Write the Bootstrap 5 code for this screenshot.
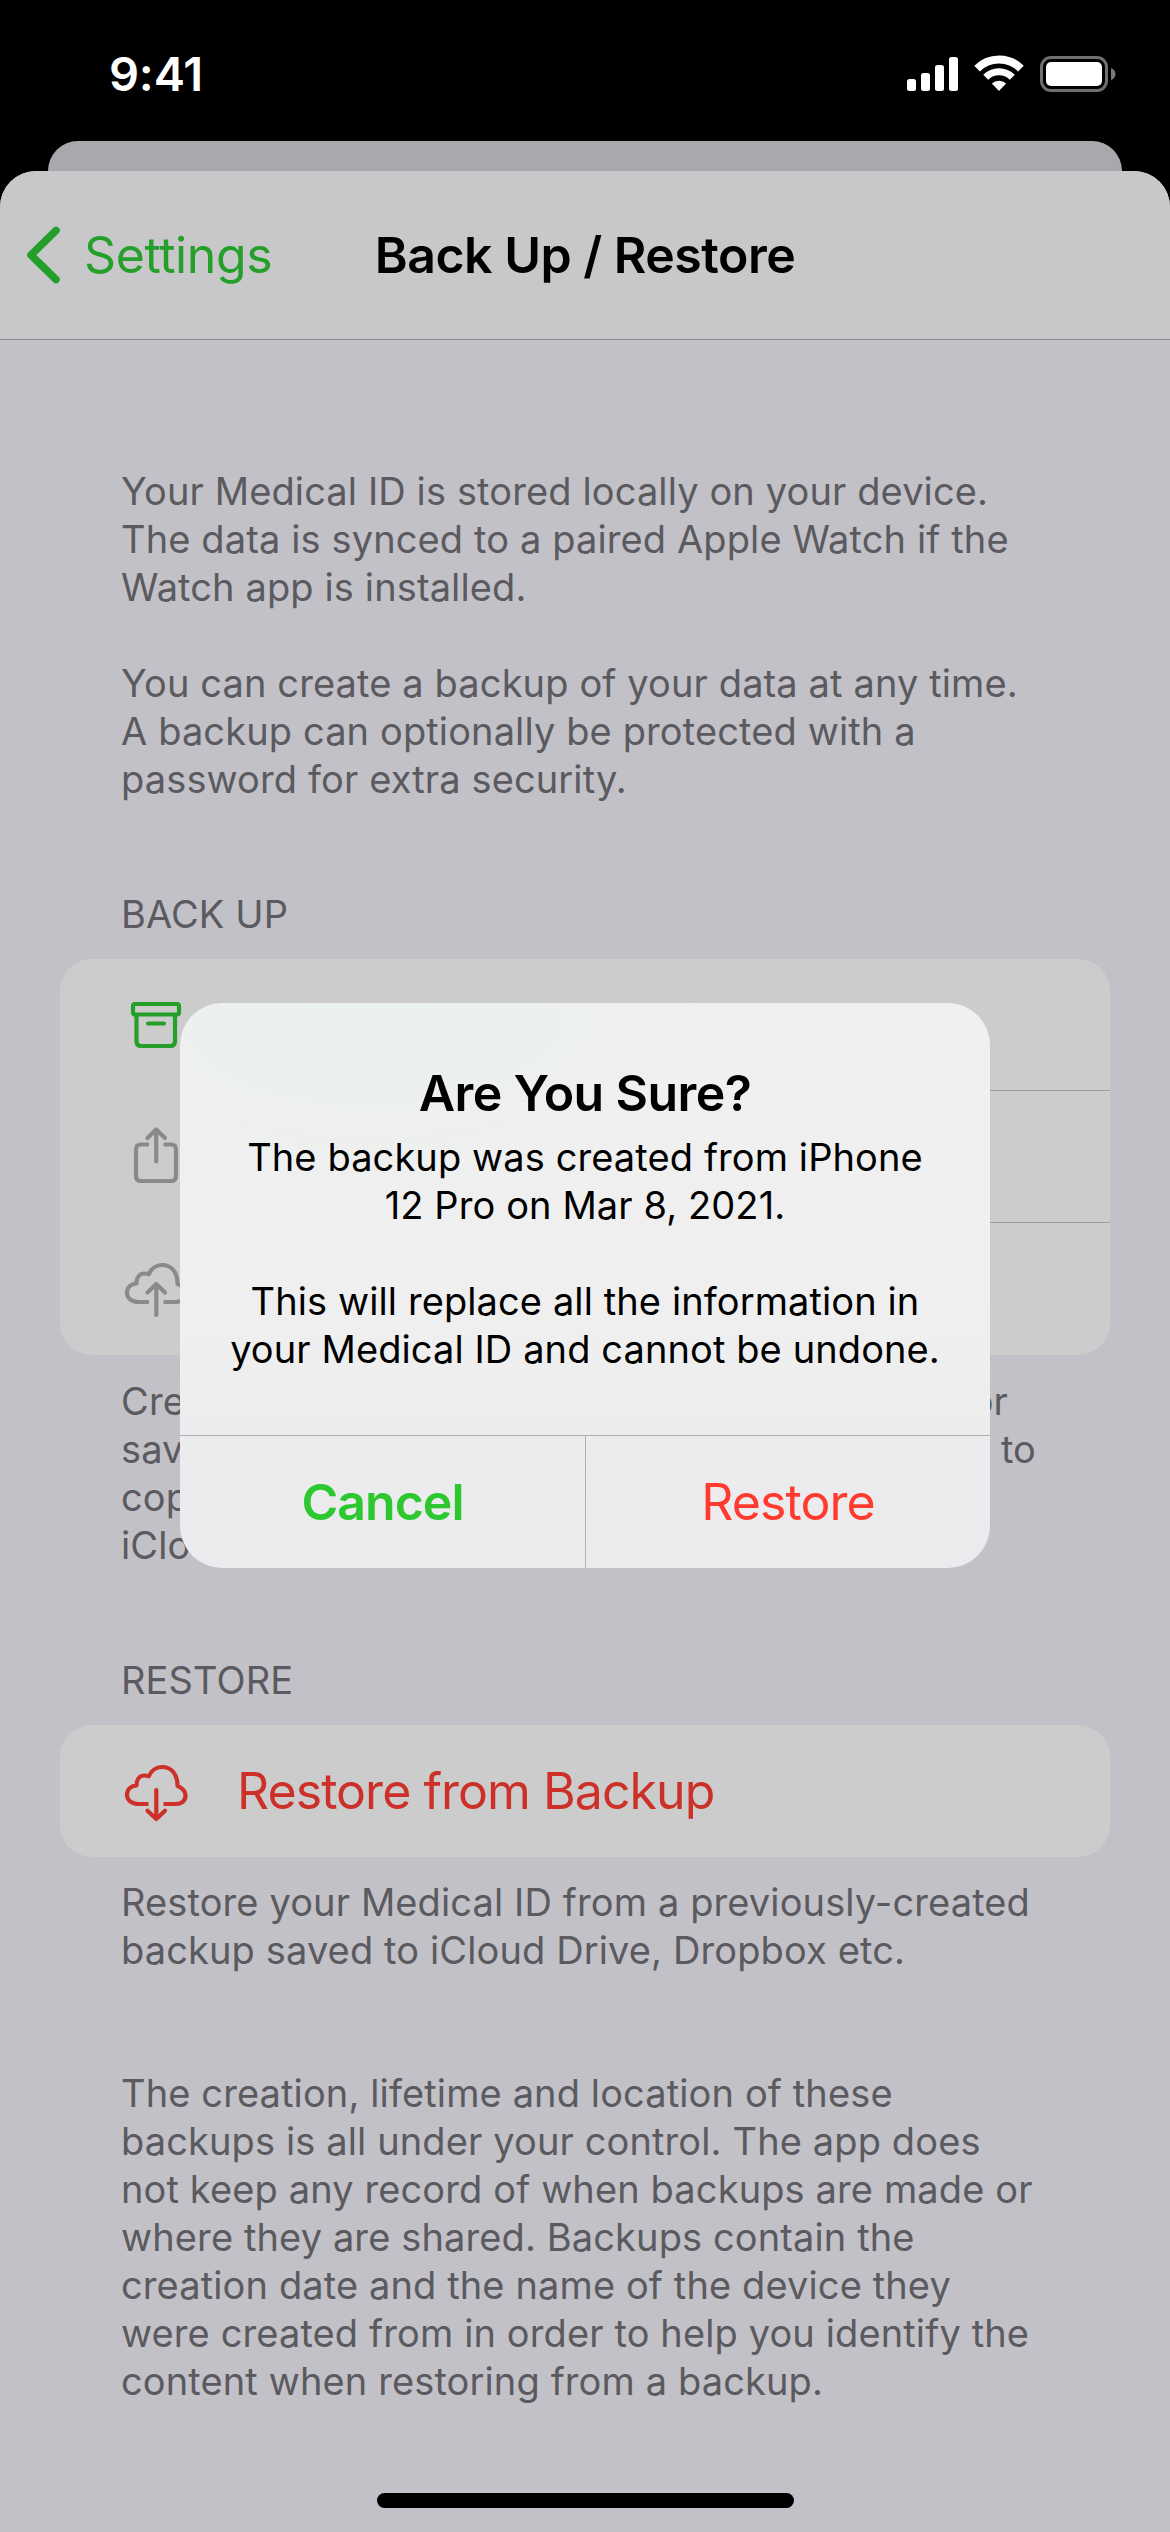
<!DOCTYPE html>
<html lang="en">
<head>
<meta charset="utf-8">
<meta name="viewport" content="width=device-width, initial-scale=1">
<title>Back Up / Restore</title>
<link href="https://cdn.jsdelivr.net/npm/bootstrap@5.3.0/dist/css/bootstrap.min.css" rel="stylesheet">
<style>
  body { background: #000; font-family: Inter, "Liberation Sans", sans-serif; }
  .phone { width: 1170px; height: 2532px; background: #000; }
  .status-bar { height: 141px; padding: 46px 54px 0 109px; }
  .clock { font-size: 47px; line-height: 56px; font-weight: 600; color: #fff; letter-spacing: -.2px; }
  .status-icons { margin-top: 8px; }
  .back-sheet { height: 30px; margin: 0 48px; background: #a9a8ad; border-radius: 34px 34px 0 0; }
  .sheet { background: #c2c1c7; border-radius: 36px 36px 0 0; height: 2361px; }
  .sheet-nav { height: 169px; background: #c8c8ca; border-bottom: 1px solid #8a8a8e; }
  .back-link { font-size: 50px; color: #249f29; gap: 23px; padding-left: 26px; letter-spacing: -.4px; }
  .back-link .stroked { stroke-width: 7.6; }
  .nav-title { font-size: 50px; font-weight: 600; color: #000; letter-spacing: -.5px; }
  .sheet-body { padding: 127px 60px 0; }
  .note { font-size: 38px; line-height: 48px; color: #5a5a5f; letter-spacing: .12px; padding: 0 61px; margin: 0; white-space: nowrap; }
  .note-after { padding-top: 22px; }
  .note-restore { padding-top: 21px; }
  .note-last { padding-top: 95px; }
  .note-first-end { padding-right: 28px; }
  .note-tail { padding-right: 13px; }
  .section-head { letter-spacing: .1px; margin: 87px 0 21px; }
  .group { border-radius: 32px; background: #ccc; overflow: hidden; }
  .item { height: 132px; padding-left: 64px; gap: 49px; color: #8a8a8a; }
  .item-green { color: #249f29; }
  .item-red { color: #cc3028; font-size: 50px; letter-spacing: -.95px; }
  .item-label { border-bottom: 1px solid #9d9d9f; }
  .item:last-child .item-label { border-bottom: 0; }
  .stroked { fill: none; stroke: currentColor; stroke-width: 4.2; stroke-linecap: round; stroke-linejoin: round; }
  .home-bar { left: 377px; top: 2493px; width: 417px; height: 15px; border-radius: 8px; background: #000; }
  .alert-box { left: 180px; top: 1003px; width: 810px; height: 565px; border-radius: 42px; overflow: hidden; color: #000;
    background: radial-gradient(420px 200px at 190px 0, rgba(215,245,222,.22), rgba(215,245,222,0)), linear-gradient(#f0f0f0, #efefef 60%, #ececee 80%, #ebebed); }
  .alert-text { height: 432px; padding-top: 58px; }
  .alert-title { font-size: 50px; line-height: 64px; font-weight: 600; letter-spacing: -.6px; margin: 0 0 8px; }
  .alert-msg { font-size: 38px; line-height: 48px; letter-spacing: .1px; margin: 0; white-space: nowrap; }
  .alert-actions { height: 133px; border-top: 1px solid #b0b0b3; }
  .alert-btn { font-size: 50px; border: 0; background: none; padding: 1px 0 0; letter-spacing: -.95px; }
  .alert-btn + .alert-btn { border-left: 1px solid #b0b0b3; }
  .cancel { color: #2dc72f; font-weight: 600; }
  .confirm { color: #ff3b30; }
</style>
</head>
<body>
<div class="phone position-relative overflow-hidden">
  <header class="status-bar d-flex justify-content-between align-items-start">
    <span class="clock">9:41</span>
    <svg class="status-icons" width="210" height="40" viewBox="906 54 210 40">
      <g fill="#fff">
        <rect x="907" y="79" width="9" height="12" rx="2.5"/>
        <rect x="921" y="73" width="9" height="18" rx="2.5"/>
        <rect x="935" y="65" width="9" height="26" rx="2.5"/>
        <rect x="949" y="57" width="9" height="34" rx="2.5"/>
        <path d="M999 91L991.9 83.6A10 10 0 0 1 1006.1 83.6Z"/>
        <rect x="1046" y="62" width="56" height="24" rx="5"/>
      </g>
      <g fill="none" stroke="#fff">
        <path stroke-width="8" d="M977.1 68.6A31 31 0 0 1 1020.9 68.6"/>
        <path stroke-width="7" d="M985.7 77.2A18.8 18.8 0 0 1 1012.3 77.2"/>
      </g>
      <rect x="1041.5" y="57.5" width="65" height="33" rx="9.5" fill="none" stroke="#6f6f6f" stroke-width="3"/>
      <path fill="#7a7a7a" d="M1111 68Q1115.500 70 1115.500 74T1111 80Z"/>
    </svg>
  </header>
  <div class="back-sheet"></div>
  <main class="sheet overflow-hidden">
    <nav class="sheet-nav row g-0 align-items-center">
      <div class="col-3 back-link d-flex align-items-center text-nowrap">
        <svg width="35" height="58" viewBox="0 0 35 58"><path class="stroked" d="M30 4.500L5 29L30 53.500"/></svg>
        <span>Settings</span>
      </div>
      <div class="col-6 nav-title text-center text-nowrap">Back Up / Restore</div>
    </nav>
    <div class="sheet-body">
      <p class="note">Your Medical ID is stored locally on your device.<br>The data is synced to a paired Apple Watch if the<br>Watch app is installed.<br><br>You can create a backup of your data at any time.<br>A backup can optionally be protected with a<br>password for extra security.</p>

      <h2 class="note section-head fw-normal">BACK UP</h2>
      <div class="group">
        <div class="item item-green d-flex align-items-center">
          <svg width="64" height="64" viewBox="0 0 64 64"><g class="stroked"><rect x="9" y="11" width="46" height="10.500" rx="2"/><path d="M12.500 22V48.500Q12.500 53 17 53H46.500Q51 53 51 48.500V22M24 30.500H40"/></g></svg>
          <div class="item-label flex-grow-1 align-self-stretch"></div>
        </div>
        <div class="item d-flex align-items-center">
          <svg width="64" height="64" viewBox="0 0 64 64"><g class="stroked"><path stroke-linecap="butt" d="M25 19.500H17Q12 19.500 12 24.500V51Q12 56 17 56H47Q52 56 52 51V24.500Q52 19.500 47 19.500H39.500"/><path d="M32.200 36.500V4.500M23.500 13L32.200 4.500L41 13"/></g></svg>
          <div class="item-label flex-grow-1 align-self-stretch"></div>
        </div>
        <div class="item d-flex align-items-center">
          <svg width="64" height="64" viewBox="0 0 64 64"><g class="stroked"><path stroke-linecap="butt" d="M25 45H14.500C7.500 45 3 41 3 36C3 30.500 7 26.800 12.500 26.400C12.500 20 16 16.500 20.500 16.500C22 16.500 23.500 16.800 24.800 17.300C27 12 32 8 38 8C47.500 8 53.500 15 53.500 26.800C58.500 29 61.500 32 61.500 36.500C61.500 42 57.500 45 51.500 45H39.500"/><path d="M32.300 58V27M23.500 35.500L32.300 27L41 35.500"/></g></svg>
          <div class="item-label flex-grow-1 align-self-stretch"></div>
        </div>
      </div>
      <div class="note note-after d-flex justify-content-between">
        <span>Cre<br>sav<br>cop<br>iClo</span>
        <span class="note-tail text-end"><span class="note-first-end">or</span><br>to</span>
      </div>

      <h2 class="note section-head fw-normal">RESTORE</h2>
      <div class="group">
        <div class="item item-red d-flex align-items-center">
          <svg width="64" height="64" viewBox="0 0 64 64"><g class="stroked"><path stroke-linecap="butt" d="M24.500 45H14.500C7.500 45 3 41 3 36C3 30.500 7 26.800 12.500 26.400C12.500 20 16 16.500 20.500 16.500C22 16.500 23.500 16.800 24.800 17.300C27 12 32 8 38 8C47.500 8 53.500 15 53.500 26.800C58.500 29 61.500 32 61.500 36.500C61.500 42 57.500 45 51.500 45H39.500"/><path d="M32.300 31V60M23.500 51.800L32.300 60L41 51.800"/></g></svg>
          <span>Restore from Backup</span>
        </div>
      </div>
      <p class="note note-restore">Restore your Medical ID from a previously-created<br>backup saved to iCloud Drive, Dropbox etc.</p>
      <p class="note note-last">The creation, lifetime and location of these<br>backups is all under your control. The app does<br>not keep any record of when backups are made or<br>where they are shared. Backups contain the<br>creation date and the name of the device they<br>were created from in order to help you identify the<br>content when restoring from a backup.</p>
    </div>
  </main>
  <div class="home-bar position-absolute"></div>

  <div class="alert-box position-absolute d-flex flex-column" role="alertdialog">
    <div class="alert-text text-center">
      <h1 class="alert-title">Are You Sure?</h1>
      <p class="alert-msg">The backup was created from iPhone<br>12 Pro on Mar 8, 2021.<br><br>This will replace all the information in<br>your Medical ID and cannot be undone.</p>
    </div>
    <div class="alert-actions d-flex">
      <button class="alert-btn cancel col-6">Cancel</button>
      <button class="alert-btn confirm col-6">Restore</button>
    </div>
  </div>
</div>
<script src="https://cdn.jsdelivr.net/npm/bootstrap@5.3.0/dist/js/bootstrap.bundle.min.js"></script>
</body>
</html>
